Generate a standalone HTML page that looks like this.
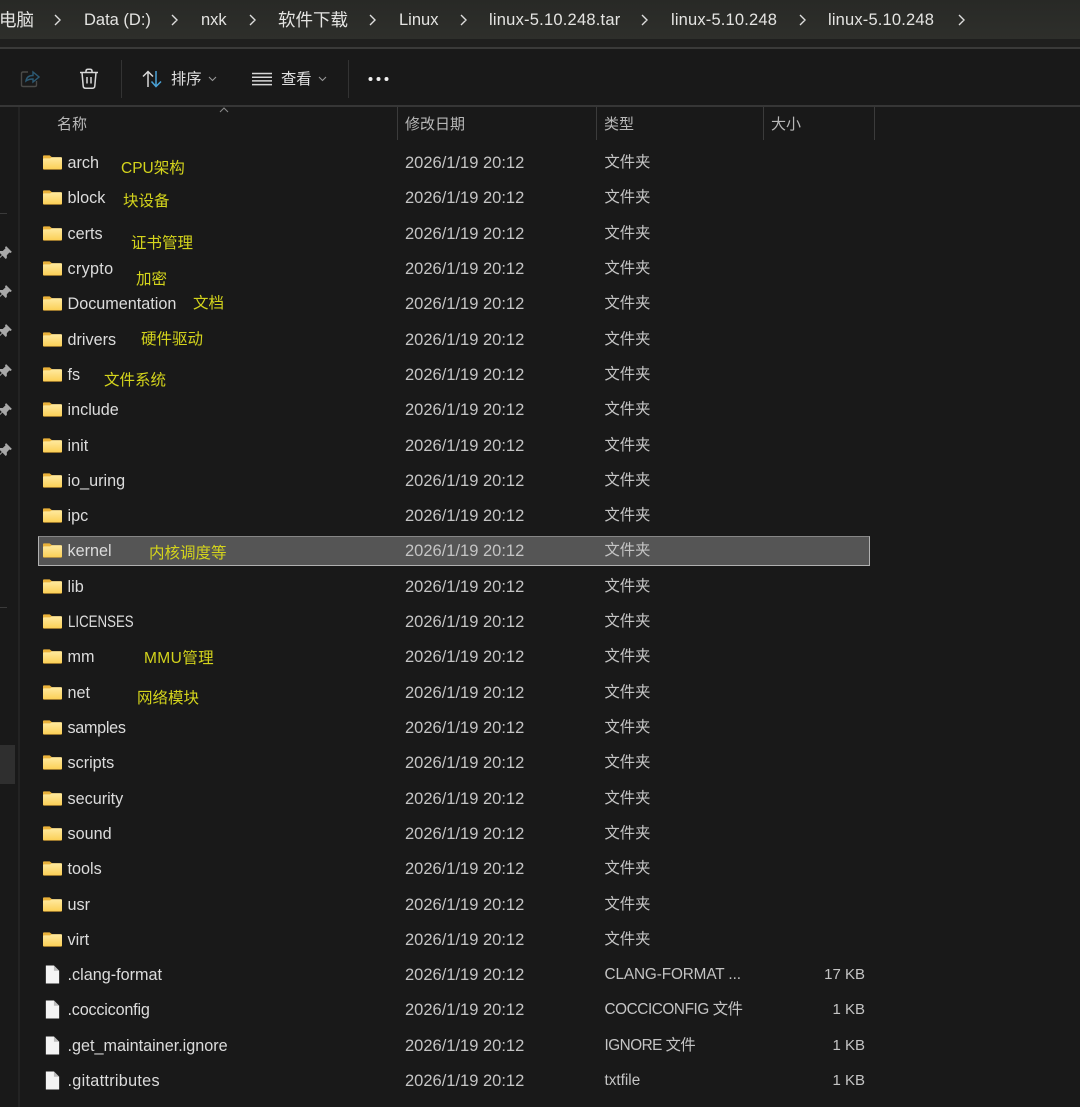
<!DOCTYPE html>
<html lang="zh">
<head>
<meta charset="utf-8">
<title>linux-5.10.248</title>
<style>
html,body{margin:0;padding:0;background:#191919;}
body{width:1080px;height:1107px;position:relative;overflow:hidden;font-family:"Liberation Sans","Noto Sans CJK SC",sans-serif;font-size:16.5px;color:#d6d6d6;}
.a{position:absolute;white-space:nowrap;}
.bar{left:0;top:0;width:1080px;height:39px;background:linear-gradient(#282926,#2e2f2b);}
.bc{position:absolute;top:8px;line-height:24px;height:24px;color:#e4e4e2;font-size:16.5px;white-space:nowrap;}
.bk{font-size:17.5px;}
.li{letter-spacing:.17px;}
.r{position:absolute;left:0;width:1080px;height:24px;line-height:24px;}
.r svg{position:absolute;left:43px;top:4px;}
.r b{font-weight:normal;font-size:16.2px;position:absolute;left:67.5px;top:0;color:#dcdcdc;}
.r i{font-style:normal;position:absolute;left:405px;top:0;color:#c4c4c4;}
.r u{text-decoration:none;font-size:15.3px;position:absolute;left:604.5px;top:0;color:#c4c4c4;white-space:nowrap;}
.r s{text-decoration:none;font-size:15px;position:absolute;right:215px;top:0;color:#c4c4c4;}
.n{position:absolute;color:#d4d41c;font-size:15.5px;line-height:22px;white-space:nowrap;}
.h{position:absolute;top:113px;line-height:24px;color:#b8b8b8;font-size:15px;white-space:nowrap;}
.v{position:absolute;width:1px;background:#3b3b3b;}
</style>
</head>
<body>
<svg width="0" height="0" style="position:absolute">
<defs>
<linearGradient id="g" x1="0" y1="0" x2="0" y2="1"><stop offset="0" stop-color="#ffeaa0"/><stop offset="1" stop-color="#fbd058"/></linearGradient>
<symbol id="fd" viewBox="0 0 20 15"><path d="M0 1C0 .4 .4 0 1 0H7L9.5 2H19C19.6 2 20 2.4 20 3V14C20 14.6 19.6 15 19 15H1C.4 15 0 14.6 0 14Z" fill="#eab23a"/><path d="M0 4.2C0 3.6 .4 3.2 1 3.2H7.5L9.5 2H19C19.6 2 20 2.4 20 3V13.6C20 14 19.6 14.3 19 14.3H1C.4 14.3 0 14 0 13.6Z" fill="url(#g)"/></symbol>
<symbol id="fl" viewBox="0 0 20 20"><path d="M3 .5H11.5L17 6V19.5H3Z" fill="#f4f4f4"/><path d="M11.5 .5V6H17Z" fill="#bdbdbd"/></symbol>
<symbol id="pin" viewBox="0 0 14 14"><path d="M8 1L13 6L11.8 7L10.8 6.6L8.6 9L8.6 11.4L7.6 12.2L4.8 9.3L1.5 12.5L1 12L4.2 8.7L1.8 6.2L2.6 5.2L5 5.2L7.4 3L7 2Z" fill="#a8a8a8"/></symbol>
</defs>
</svg>

<div class="a bar"></div>
<div class="a" style="left:0;top:39px;width:1080px;height:8px;background:#1f1f1e"></div>
<div class="a" style="left:0;top:47px;width:1080px;height:2px;background:#3a3a39"></div>
<div class="a" style="left:0;top:105px;width:1080px;height:2px;background:#363636"></div>
<div class="a" style="left:18px;top:107px;width:2px;height:1000px;background:#232323"></div>

<span class="bc bk" style="left:-1px">电脑</span>
<span class="bc" style="left:84px">Data (D:)</span>
<span class="bc" style="left:201px">nxk</span>
<span class="bc bk" style="left:278px">软件下载</span>
<span class="bc" style="left:399px">Linux</span>
<span class="bc li" style="left:489px;letter-spacing:.22px">linux-5.10.248.tar</span>
<span class="bc li" style="left:671px">linux-5.10.248</span>
<span class="bc li" style="left:828px">linux-5.10.248</span>
<svg class="a" style="left:0;top:0" width="1080" height="40" fill="none" stroke="#dedede" stroke-width="1.4">
<path d="M55 15L60 20L55 25M172 15L177 20L172 25M250 15L255 20L250 25M370 15L375 20L370 25M461 15L466 20L461 25M642 15L647 20L642 25M800 15L805 20L800 25M959 15L964 20L959 25"/>
</svg>

<!-- toolbar -->
<svg class="a" style="left:20px;top:69px" width="20" height="20" fill="none" stroke-width="1.4">
<path d="M8 3H3C2 3 1.5 3.6 1.5 4.5V16C1.5 17 2 17.5 3 17.5H15C16 17.5 16.5 17 16.5 16V12" stroke="#4a4a48"/>
<path d="M6 12C6.5 8.5 9 6.5 13 6.5V3L19 8L13 13V10C10 10 8 10.5 6 12Z" stroke="#2c5a74"/>
</svg>
<svg class="a" style="left:79px;top:68px" width="20" height="22" fill="none" stroke="#d8d8d8" stroke-width="1.5">
<path d="M1 4.5H19M7 4.5V3C7 1.8 7.8 1.2 9 1.2H11C12.2 1.2 13 1.8 13 3V4.5M3 4.5L4.2 18C4.3 19.5 5.2 20.2 6.5 20.2H13.5C14.8 20.2 15.7 19.5 15.8 18L17 4.5M8 9V15.5M12 9V15.5"/>
</svg>
<div class="v" style="left:121px;top:60px;height:38px;background:#333"></div>
<svg class="a" style="left:142px;top:70px" width="20" height="18" fill="none" stroke-width="1.5">
<path d="M6 17V1.5M1 6.5L6 1.5L11 6.5" stroke="#d8d8d8"/>
<path d="M14 1V16.5M9.5 11.5L14 16.5L19 11.5" stroke="#4aa3d8"/>
</svg>
<span class="a" style="left:171px;top:69px;line-height:22px;font-size:15.3px;color:#e0e0e0">排序</span>
<svg class="a" style="left:208px;top:76px" width="9" height="6" fill="none" stroke="#999" stroke-width="1.1"><path d="M1 1L4.5 4.5L8 1"/></svg>
<svg class="a" style="left:252px;top:72px" width="20" height="14" fill="none" stroke="#d8d8d8" stroke-width="1.5"><path d="M0 1.5H20M0 5.2H20M0 8.9H20M0 12.6H20"/></svg>
<span class="a" style="left:281px;top:69px;line-height:22px;font-size:15.3px;color:#e0e0e0">查看</span>
<svg class="a" style="left:318px;top:76px" width="9" height="6" fill="none" stroke="#999" stroke-width="1.1"><path d="M1 1L4.5 4.5L8 1"/></svg>
<div class="v" style="left:348px;top:60px;height:38px;background:#333"></div>
<svg class="a" style="left:368px;top:76px" width="21" height="6" fill="#f0f0f0"><circle cx="2.5" cy="3" r="2"/><circle cx="10.5" cy="3" r="2"/><circle cx="18.5" cy="3" r="2"/></svg>

<!-- header -->
<span class="h" style="left:57px">名称</span>
<span class="h" style="left:405px">修改日期</span>
<span class="h" style="left:604px">类型</span>
<span class="h" style="left:771px">大小</span>
<svg class="a" style="left:219px;top:107px" width="10" height="6" fill="none" stroke="#888" stroke-width="1.1"><path d="M1 5L5 1L9 5"/></svg>
<div class="v" style="left:397px;top:107px;height:33px"></div>
<div class="v" style="left:596px;top:107px;height:33px"></div>
<div class="v" style="left:763px;top:107px;height:33px"></div>
<div class="v" style="left:874px;top:107px;height:33px"></div>

<!-- sidebar -->
<div class="a" style="left:0;top:213px;width:7px;height:1px;background:#3a3a3a"></div>
<div class="a" style="left:0;top:607px;width:7px;height:1px;background:#3a3a3a"></div>
<div class="a" style="left:0;top:745px;width:15px;height:39px;background:#2f2f2f"></div>
<svg class="a" style="left:-3px;top:245px" width="16" height="16"><use href="#pin"/></svg>
<svg class="a" style="left:-3px;top:284px" width="16" height="16"><use href="#pin"/></svg>
<svg class="a" style="left:-3px;top:323px" width="16" height="16"><use href="#pin"/></svg>
<svg class="a" style="left:-3px;top:363px" width="16" height="16"><use href="#pin"/></svg>
<svg class="a" style="left:-3px;top:402px" width="16" height="16"><use href="#pin"/></svg>
<svg class="a" style="left:-3px;top:442px" width="16" height="16"><use href="#pin"/></svg>

<!-- selection -->
<div class="a" style="left:38px;top:536px;width:830px;height:28px;background:#555;border:1px solid #b0b0b0;border-top-color:#868686"></div>

<!-- rows -->
<div class="r" style="top:151px"><svg width="19" height="15"><use href="#fd"/></svg><b>arch</b><i>2026/1/19 20:12</i><u>文件夹</u></div>
<div class="r" style="top:186px"><svg width="19" height="15"><use href="#fd"/></svg><b>block</b><i>2026/1/19 20:12</i><u>文件夹</u></div>
<div class="r" style="top:222px"><svg width="19" height="15"><use href="#fd"/></svg><b>certs</b><i>2026/1/19 20:12</i><u>文件夹</u></div>
<div class="r" style="top:257px"><svg width="19" height="15"><use href="#fd"/></svg><b style="letter-spacing:.3px">crypto</b><i>2026/1/19 20:12</i><u>文件夹</u></div>
<div class="r" style="top:292px"><svg width="19" height="15"><use href="#fd"/></svg><b>Documentation</b><i>2026/1/19 20:12</i><u>文件夹</u></div>
<div class="r" style="top:328px"><svg width="19" height="15"><use href="#fd"/></svg><b>drivers</b><i>2026/1/19 20:12</i><u>文件夹</u></div>
<div class="r" style="top:363px"><svg width="19" height="15"><use href="#fd"/></svg><b>fs</b><i>2026/1/19 20:12</i><u>文件夹</u></div>
<div class="r" style="top:398px"><svg width="19" height="15"><use href="#fd"/></svg><b>include</b><i>2026/1/19 20:12</i><u>文件夹</u></div>
<div class="r" style="top:434px"><svg width="19" height="15"><use href="#fd"/></svg><b>init</b><i>2026/1/19 20:12</i><u>文件夹</u></div>
<div class="r" style="top:469px"><svg width="19" height="15"><use href="#fd"/></svg><b>io_uring</b><i>2026/1/19 20:12</i><u>文件夹</u></div>
<div class="r" style="top:504px"><svg width="19" height="15"><use href="#fd"/></svg><b>ipc</b><i>2026/1/19 20:12</i><u>文件夹</u></div>
<div class="r" style="top:539px"><svg width="19" height="15"><use href="#fd"/></svg><b>kernel</b><i>2026/1/19 20:12</i><u>文件夹</u></div>
<div class="r" style="top:575px"><svg width="19" height="15"><use href="#fd"/></svg><b>lib</b><i>2026/1/19 20:12</i><u>文件夹</u></div>
<div class="r" style="top:610px"><svg width="19" height="15"><use href="#fd"/></svg><b style="transform:scaleX(.82);transform-origin:left">LICENSES</b><i>2026/1/19 20:12</i><u>文件夹</u></div>
<div class="r" style="top:645px"><svg width="19" height="15"><use href="#fd"/></svg><b>mm</b><i>2026/1/19 20:12</i><u>文件夹</u></div>
<div class="r" style="top:681px"><svg width="19" height="15"><use href="#fd"/></svg><b>net</b><i>2026/1/19 20:12</i><u>文件夹</u></div>
<div class="r" style="top:716px"><svg width="19" height="15"><use href="#fd"/></svg><b style="letter-spacing:-.3px">samples</b><i>2026/1/19 20:12</i><u>文件夹</u></div>
<div class="r" style="top:751px"><svg width="19" height="15"><use href="#fd"/></svg><b>scripts</b><i>2026/1/19 20:12</i><u>文件夹</u></div>
<div class="r" style="top:787px"><svg width="19" height="15"><use href="#fd"/></svg><b>security</b><i>2026/1/19 20:12</i><u>文件夹</u></div>
<div class="r" style="top:822px"><svg width="19" height="15"><use href="#fd"/></svg><b>sound</b><i>2026/1/19 20:12</i><u>文件夹</u></div>
<div class="r" style="top:857px"><svg width="19" height="15"><use href="#fd"/></svg><b>tools</b><i>2026/1/19 20:12</i><u>文件夹</u></div>
<div class="r" style="top:893px"><svg width="19" height="15"><use href="#fd"/></svg><b>usr</b><i>2026/1/19 20:12</i><u>文件夹</u></div>
<div class="r" style="top:928px"><svg width="19" height="15"><use href="#fd"/></svg><b>virt</b><i>2026/1/19 20:12</i><u>文件夹</u></div>
<div class="r" style="top:963px"><svg width="19" height="19" style="top:2px"><use href="#fl"/></svg><b>.clang-format</b><i>2026/1/19 20:12</i><u style="letter-spacing:-.1px">CLANG-FORMAT ...</u><s>17 KB</s></div>
<div class="r" style="top:998px"><svg width="19" height="19" style="top:2px"><use href="#fl"/></svg><b style="letter-spacing:-.2px">.cocciconfig</b><i>2026/1/19 20:12</i><u style="letter-spacing:-.4px">COCCICONFIG 文件</u><s>1 KB</s></div>
<div class="r" style="top:1034px"><svg width="19" height="19" style="top:2px"><use href="#fl"/></svg><b>.get_maintainer.ignore</b><i>2026/1/19 20:12</i><u style="letter-spacing:-.5px">IGNORE 文件</u><s>1 KB</s></div>
<div class="r" style="top:1069px"><svg width="19" height="19" style="top:2px"><use href="#fl"/></svg><b style="letter-spacing:.3px">.gitattributes</b><i>2026/1/19 20:12</i><u>txtfile</u><s>1 KB</s></div>

<!-- annotations -->
<span class="n" style="left:121px;top:158px">CPU架构</span>
<span class="n" style="left:123px;top:191px">块设备</span>
<span class="n" style="left:131px;top:233px">证书管理</span>
<span class="n" style="left:136px;top:269px">加密</span>
<span class="n" style="left:193px;top:293px">文档</span>
<span class="n" style="left:141px;top:329px">硬件驱动</span>
<span class="n" style="left:104px;top:370px">文件系统</span>
<span class="n" style="left:149px;top:543px">内核调度等</span>
<span class="n" style="left:144px;top:648px;letter-spacing:.4px">MMU管理</span>
<span class="n" style="left:137px;top:688px">网络模块</span>
</body>
</html>
